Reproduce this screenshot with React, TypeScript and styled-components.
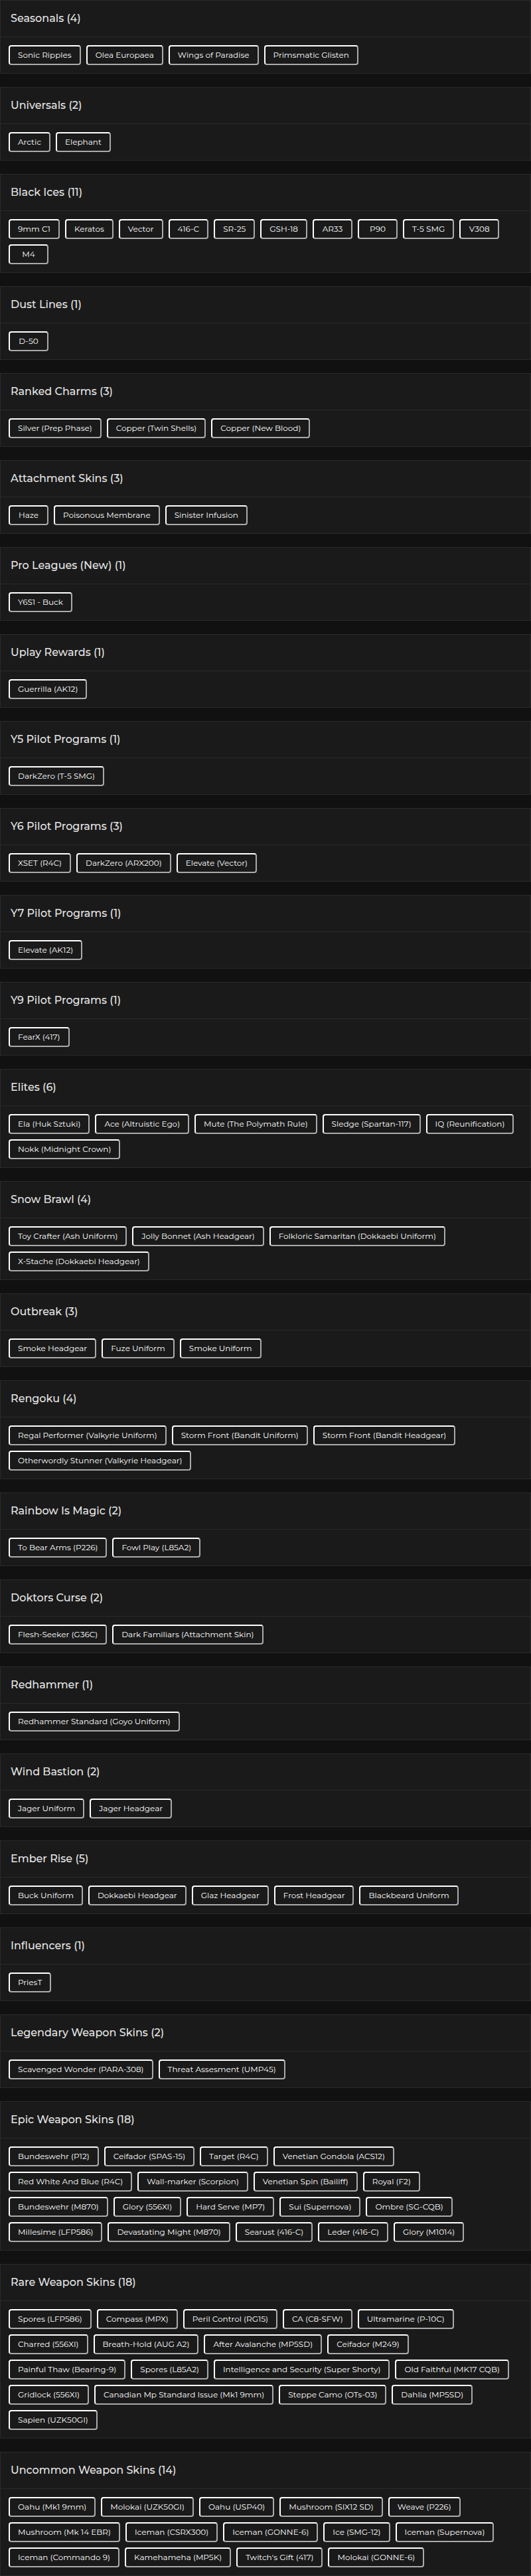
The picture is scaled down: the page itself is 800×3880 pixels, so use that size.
import React from "react";
import styled, { createGlobalStyle } from "styled-components";

const GlobalStyle = createGlobalStyle`
  *, *::before, *::after { box-sizing: border-box; }
  body {
    margin: 0;
    background: #111111;
    color: #e6e6e6;
    font-family: Montserrat, Inter, "Liberation Sans", sans-serif;
  }
`;

const Page = styled.main`
  display: flex;
  flex-direction: column;
  gap: 20px;
`;

const Panel = styled.section`
  background: #1a1a1a;
  border: 1px solid #2a2a2a;
`;

const PanelHeader = styled.header`
  display: flex;
  align-items: center;
  height: 55px;
  padding: 0 15px;
  border-bottom: 1px solid #2a2a2a;
`;

const PanelTitle = styled.h2`
  margin: 0;
  font-size: 16px;
  line-height: 20px;
  font-weight: 500;
`;

const ItemList = styled.div`
  display: flex;
  flex-wrap: wrap;
  gap: 8px;
  padding: 12px;
`;

const ItemButton = styled.button`
  min-width: 60px;
  height: 30px;
  padding: 0 12px;
  border: 2px solid;
  border-color: #ffffff #aaaaaa #aaaaaa #ffffff;
  border-radius: 4px;
  background: #1a1a1a;
  color: #ffffff;
  font-family: inherit;
  font-size: 12px;
  line-height: 16px;
  font-weight: 400;
  white-space: nowrap;
  cursor: pointer;
`;

type Category = { name: string; items: string[] };

const categories: Category[] = [
  { name: "Seasonals", items: ["Sonic Ripples", "Olea Europaea", "Wings of Paradise", "Primsmatic Glisten"] },
  { name: "Universals", items: ["Arctic", "Elephant"] },
  {
    name: "Black Ices",
    items: ["9mm C1", "Keratos", "Vector", "416-C", "SR-25", "GSH-18", "AR33", "P90", "T-5 SMG", "V308", "M4"],
  },
  { name: "Dust Lines", items: ["D-50"] },
  { name: "Ranked Charms", items: ["Silver (Prep Phase)", "Copper (Twin Shells)", "Copper (New Blood)"] },
  { name: "Attachment Skins", items: ["Haze", "Poisonous Membrane", "Sinister Infusion"] },
  { name: "Pro Leagues (New)", items: ["Y6S1 - Buck"] },
  { name: "Uplay Rewards", items: ["Guerrilla (AK12)"] },
  { name: "Y5 Pilot Programs", items: ["DarkZero (T-5 SMG)"] },
  { name: "Y6 Pilot Programs", items: ["XSET (R4C)", "DarkZero (ARX200)", "Elevate (Vector)"] },
  { name: "Y7 Pilot Programs", items: ["Elevate (AK12)"] },
  { name: "Y9 Pilot Programs", items: ["FearX (417)"] },
  {
    name: "Elites",
    items: [
      "Ela (Huk Sztuki)",
      "Ace (Altruistic Ego)",
      "Mute (The Polymath Rule)",
      "Sledge (Spartan-117)",
      "IQ (Reunification)",
      "Nokk (Midnight Crown)",
    ],
  },
  {
    name: "Snow Brawl",
    items: [
      "Toy Crafter (Ash Uniform)",
      "Jolly Bonnet (Ash Headgear)",
      "Folkloric Samaritan (Dokkaebi Uniform)",
      "X-Stache (Dokkaebi Headgear)",
    ],
  },
  { name: "Outbreak", items: ["Smoke Headgear", "Fuze Uniform", "Smoke Uniform"] },
  {
    name: "Rengoku",
    items: [
      "Regal Performer (Valkyrie Uniform)",
      "Storm Front (Bandit Uniform)",
      "Storm Front (Bandit Headgear)",
      "Otherwordly Stunner (Valkyrie Headgear)",
    ],
  },
  { name: "Rainbow Is Magic", items: ["To Bear Arms (P226)", "Fowl Play (L85A2)"] },
  { name: "Doktors Curse", items: ["Flesh-Seeker (G36C)", "Dark Familiars (Attachment Skin)"] },
  { name: "Redhammer", items: ["Redhammer Standard (Goyo Uniform)"] },
  { name: "Wind Bastion", items: ["Jager Uniform", "Jager Headgear"] },
  {
    name: "Ember Rise",
    items: ["Buck Uniform", "Dokkaebi Headgear", "Glaz Headgear", "Frost Headgear", "Blackbeard Uniform"],
  },
  { name: "Influencers", items: ["PriesT"] },
  { name: "Legendary Weapon Skins", items: ["Scavenged Wonder (PARA-308)", "Threat Assesment (UMP45)"] },
  {
    name: "Epic Weapon Skins",
    items: [
      "Bundeswehr (P12)",
      "Ceifador (SPAS-15)",
      "Target (R4C)",
      "Venetian Gondola (ACS12)",
      "Red White And Blue (R4C)",
      "Wall-marker (Scorpion)",
      "Venetian Spin (Bailiff)",
      "Royal (F2)",
      "Bundeswehr (M870)",
      "Glory (556XI)",
      "Hard Serve (MP7)",
      "Sui (Supernova)",
      "Ombre (SG-CQB)",
      "Millesime (LFP586)",
      "Devastating Might (M870)",
      "Searust (416-C)",
      "Leder (416-C)",
      "Glory (M1014)",
    ],
  },
  {
    name: "Rare Weapon Skins",
    items: [
      "Spores (LFP586)",
      "Compass (MPX)",
      "Peril Control (RG15)",
      "CA (C8-SFW)",
      "Ultramarine (P-10C)",
      "Charred (556XI)",
      "Breath-Hold (AUG A2)",
      "After Avalanche (MP5SD)",
      "Ceifador (M249)",
      "Painful Thaw (Bearing-9)",
      "Spores (L85A2)",
      "Intelligence and Security (Super Shorty)",
      "Old Faithful (MK17 CQB)",
      "Gridlock (556XI)",
      "Canadian Mp Standard Issue (Mk1 9mm)",
      "Steppe Camo (OTs-03)",
      "Dahlia (MP5SD)",
      "Sapien (UZK50GI)",
    ],
  },
  {
    name: "Uncommon Weapon Skins",
    items: [
      "Oahu (Mk1 9mm)",
      "Molokai (UZK50GI)",
      "Oahu (USP40)",
      "Mushroom (SIX12 SD)",
      "Weave (P226)",
      "Mushroom (Mk 14 EBR)",
      "Iceman (CSRX300)",
      "Iceman (GONNE-6)",
      "Ice (SMG-12)",
      "Iceman (Supernova)",
      "Iceman (Commando 9)",
      "Kamehameha (MP5K)",
      "Twitch's Gift (417)",
      "Molokai (GONNE-6)",
    ],
  },
];

export default function App() {
  return (
    <>
      <GlobalStyle />
      <Page>
        {categories.map(({ name, items }) => (
          <Panel key={name}>
            <PanelHeader>
              <PanelTitle>{`${name} (${items.length})`}</PanelTitle>
            </PanelHeader>
            <ItemList>
              {items.map((item) => (
                <ItemButton key={item} type="button">
                  {item}
                </ItemButton>
              ))}
            </ItemList>
          </Panel>
        ))}
      </Page>
    </>
  );
}
